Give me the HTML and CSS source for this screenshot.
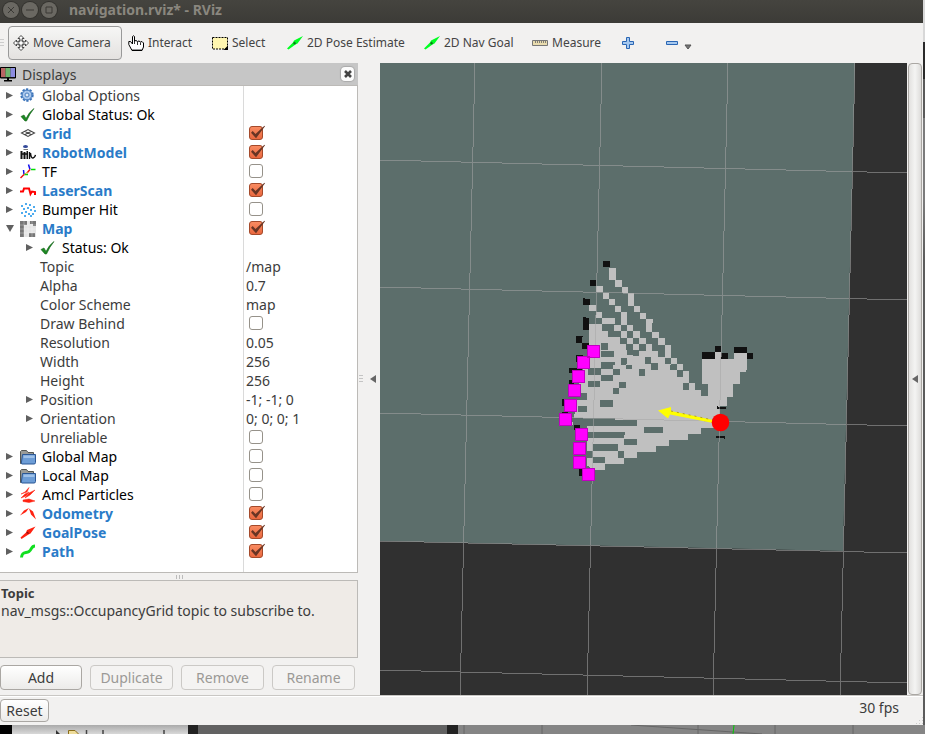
FILE: index.html
```html
<!DOCTYPE html>
<html lang="en">
<head>
<meta charset="utf-8">
<title>navigation.rviz* - RViz</title>
<link rel="stylesheet" href="styles.css">
</head>
<body>
<svg class="defs" aria-hidden="true">
  <symbol id="check" viewBox="0 0 16 16"><path d="M1 9.500 4 8 6 11.500Q9 5 14 1.500 9.500 7 6.500 14H5Z" fill="#1c8a22" stroke="#14621a" stroke-width=".6"/></symbol>
  <symbol id="folder" viewBox="0 0 16 16"><path d="M.5 14.500V2.500L1.500 1.500H6.500L8 3.500H13.500V14Z" fill="#999b98" stroke="#555753"/><path d="M2.500 5.500H15.500V13.500Q15.500 15 14 15H2Q.8 15 1.500 13Z" fill="#6d9dd6" stroke="#2b5795"/><path d="M3.500 6.500H14.500V9H3.500Z" fill="#9fc1e8"/></symbol>
  <symbol id="pose" viewBox="0 0 16 16"><path d="M0 13.500 6 7.500 7 5.500 16 1 10.500 8.500 8.500 9.500 1.500 14.500Z" fill="#0f2"/><path d="M6 8 8 6.500 9 9 7 9.500Z" fill="#087a18"/></symbol>
</svg>
<div class="window">
  <header class="titlebar">
    <button class="wm" aria-label="Close"><svg viewBox="0 0 16 16"><path d="M5 5 11 11M11 5 5 11"/></svg></button>
    <button class="wm" aria-label="Minimize"><svg viewBox="0 0 16 16"><path d="M4 8H12"/></svg></button>
    <button class="wm" aria-label="Maximize"><svg viewBox="0 0 16 16"><path d="M5 5H11V11H5Z"/></svg></button>
    <h1>navigation.rviz* - RViz</h1>
  </header>
  <nav class="toolbar">
    <span class="grip"></span>
    <button class="tool on"><svg viewBox="0 0 16 16"><path d="M8 .5 11 3.500H9.200V6.800H12.500V5L15.500 8 12.500 11V9.200H9.200V12.500H11L8 15.500 5 12.500H6.800V9.200H3.500V11L.5 8 3.500 5V6.800H6.800V3.500H5Z" fill="#fff" stroke="#333" stroke-width=".9"/><circle cx="8" cy="8" r="3" fill="none" stroke="#555" stroke-width=".7"/></svg>Move Camera</button>
    <button class="tool interact"><svg viewBox="0 0 16 16"><path d="M4.500 9V1.500Q5.500 0 6.500 1.500V6L8 5.500 9.500 6.500 11 6 12.500 7 14 6.500 15.500 8V12L14 15.500H4L.8 9.500V6.500H2.500L4.500 9" fill="#fff" stroke="#000"/><path d="M6.500 5V9M9.500 7V10M12.500 7.500V10M4 15H14" stroke="#000" stroke-width=".8"/></svg>Interact</button>
    <button class="tool select"><svg viewBox="0 0 16 16"><path d="M.5 2.500H15.500V14H.5Z" fill="#fff6b0" stroke="#000" stroke-dasharray="2 1"/><path d="M16 10.500V15H11.500Z"/></svg>Select</button>
    <button class="tool pose"><svg><use href="#pose"/></svg>2D Pose Estimate</button>
    <button class="tool goal"><svg><use href="#pose"/></svg>2D Nav Goal</button>
    <button class="tool measure"><svg viewBox="0 0 16 16"><path d="M.5 5.500H15.500V10.500H.5Z" fill="#e9dcae" stroke="#777"/><path d="M3.500 6V8M5.500 6V8M7.500 6V8M9.500 6V8M11.500 6V8M13.500 6V8" stroke="#666" stroke-width=".8"/></svg>Measure</button>
    <button class="tool plus" aria-label="Add tool"><svg viewBox="0 0 16 16"><path d="M6.500 2.500H9.500V6.500H13.500V9.500H9.500V13.500H6.500V9.500H2.500V6.500H6.500Z" fill="#a6c8ee" stroke="#2a66b4"/></svg></button>
    <button class="tool minus" aria-label="Remove tool"><svg viewBox="0 0 16 16"><path d="M2.500 6.500H13.500V9.500H2.500Z" fill="#a6c8ee" stroke="#2a66b4"/></svg><svg class="drop" viewBox="0 0 8 8"><path d="M1 3H7L4 7Z" fill="#777" stroke="#555"/></svg></button>
  </nav>
  <main>
    <section class="dock">
      <header class="docktitle"><svg viewBox="0 0 16 16"><path d="M.5 1.500H15.500V12H.5Z" fill="#222" stroke="#000"/><path d="M1 2H5.500V11H1Z" fill="#b96565"/><path d="M5.500 2H10.500V11H5.500Z" fill="#6fb56f"/><path d="M10.500 2H15V11H10.500Z" fill="#8d8de0"/><path d="M7 12H9V14H12V15.500H4V14H7Z"/></svg><h2>Displays</h2><button aria-label="Close panel"><svg viewBox="0 0 8 8"><path d="M1 1 7 7M7 1 1 7" stroke="#444" stroke-width="2.600"/></svg></button></header>
      <div class="tree">
      <table>
        <colgroup><col class="names"><col></colgroup>
        <tbody>
        <tr><td><button class="ex" aria-label="Expand"></button><svg viewBox="0 0 16 16"><circle cx="7" cy="7" r="5.700" fill="#9dbfe8" stroke="#3b73b9" stroke-width="2" stroke-dasharray="2.200 1.400"/><circle cx="7" cy="7" r="4.800" fill="#a9c7ec" stroke="#4c80c0"/><circle cx="7" cy="7" r="2" fill="#dce9f8" stroke="#4c80c0"/></svg>Global Options</td><td></td></tr>
        <tr class="blk"><td><button class="ex" aria-label="Expand"></button><svg><use href="#check"/></svg>Global Status: Ok</td><td></td></tr>
        <tr class="en"><td><button class="ex" aria-label="Expand"></button><svg viewBox="0 0 16 16"><path d="M1.500 7 8 3.500 14.500 7 8 10.500ZM4.700 5.200 11.300 8.800M11.300 5.200 4.700 8.800" fill="none" stroke="#444" stroke-width="1.100"/></svg><label for="c1">Grid</label></td><td><input type="checkbox" id="c1" checked></td></tr>
        <tr class="en"><td><button class="ex" aria-label="Expand"></button><svg viewBox="0 0 16 16"><ellipse cx="5.500" cy="1.500" rx="2.500" ry="1.500" fill="#334a9a"/><path d="M3.500 4.500H8" stroke="#777"/><path d="M.5 6H2.500V14H.5ZM3.500 7H5.500V14H3.500ZM6.500 6H8V14H6.500Z" fill="#111"/><path d="M2 9H8M9.500 7V14M10.500 8Q11 13.500 13 13T15.500 10" fill="none" stroke="#111" stroke-width="1.400"/></svg><label for="c2">RobotModel</label></td><td><input type="checkbox" id="c2" checked></td></tr>
        <tr class="blk"><td><button class="ex" aria-label="Expand"></button><svg viewBox="0 0 16 16"><path d="M11 5.500H15.500M4 10.500H8" stroke="#0d0" stroke-width="1.300"/><path d="M10 5.500 8.500 .5M4 10.500 3.500 6" stroke="#11e" stroke-width="1.500"/><path d="M10 5.500 7 9M4 10.500 .5 14" stroke="#e11" stroke-width="1.500"/><path d="M8 8 4 10.500" stroke="#e5a52c"/></svg><label for="c3">TF</label></td><td><input type="checkbox" id="c3"></td></tr>
        <tr class="en"><td><button class="ex" aria-label="Expand"></button><svg viewBox="0 0 16 16"><path d="M.5 9.500V8.500H3L4 5.500H9L10 9 10.500 11 12 8.500 15 9V12" fill="none" stroke="red" stroke-width="2"/></svg><label for="c4">LaserScan</label></td><td><input type="checkbox" id="c4" checked></td></tr>
        <tr class="blk"><td><button class="ex" aria-label="Expand"></button><svg viewBox="0 0 16 16"><path d="M1 4h2M5 2h2M9 3h2M13 5h2M3 7h2M7 6h2M10 8h2M14 9h2M1 11h2M5 10h2M8 12h2M12 12h2M4 14h2M10 14h2" stroke="#1691ea" stroke-width="1.500"/></svg><label for="c5">Bumper Hit</label></td><td><input type="checkbox" id="c5"></td></tr>
        <tr class="en"><td><button class="ex open" aria-label="Collapse"></button><svg viewBox="0 0 16 16"><path d="M0 0H16V16H0Z" fill="#e4e4e4"/><path d="M0 0H7V4H4V16H0ZM10 0H16V5H13V3H10ZM9 12H15V16H9Z" fill="#777"/><path d="M0 4H16M0 8H16M0 12H16M4 0V16M8 0V16M12 0V16" stroke="#fff" stroke-opacity=".5" stroke-width=".6"/></svg><label for="c6">Map</label></td><td><input type="checkbox" id="c6" checked></td></tr>
        <tr class="sub blk"><td><button class="ex" aria-label="Expand"></button><svg><use href="#check"/></svg>Status: Ok</td><td></td></tr>
        <tr class="prop"><td>Topic</td><td>/map</td></tr>
        <tr class="prop"><td>Alpha</td><td>0.7</td></tr>
        <tr class="prop"><td>Color Scheme</td><td>map</td></tr>
        <tr class="prop"><td><label for="c7">Draw Behind</label></td><td><input type="checkbox" id="c7"></td></tr>
        <tr class="prop"><td>Resolution</td><td>0.05</td></tr>
        <tr class="prop"><td>Width</td><td>256</td></tr>
        <tr class="prop"><td>Height</td><td>256</td></tr>
        <tr class="sub"><td><button class="ex" aria-label="Expand"></button>Position</td><td>-1; -1; 0</td></tr>
        <tr class="sub"><td><button class="ex" aria-label="Expand"></button>Orientation</td><td>0; 0; 0; 1</td></tr>
        <tr class="prop"><td><label for="c8">Unreliable</label></td><td><input type="checkbox" id="c8"></td></tr>
        <tr class="blk"><td><button class="ex" aria-label="Expand"></button><svg><use href="#folder"/></svg><label for="c9">Global Map</label></td><td><input type="checkbox" id="c9"></td></tr>
        <tr class="blk"><td><button class="ex" aria-label="Expand"></button><svg><use href="#folder"/></svg><label for="c10">Local Map</label></td><td><input type="checkbox" id="c10"></td></tr>
        <tr class="blk"><td><button class="ex" aria-label="Expand"></button><svg viewBox="0 0 16 16"><path d="M1 7 5 5 9 .5 7 5ZM5 11 9 6 15 3 10 8ZM1 11 5 7 9 5 6 9ZM3 13 9 12 15 14 9 15.500 3 14.500Z" fill="#f21" stroke="#f21" stroke-width=".5"/></svg><label for="c11">Amcl Particles</label></td><td><input type="checkbox" id="c11"></td></tr>
        <tr class="en"><td><button class="ex" aria-label="Expand"></button><svg viewBox="0 0 16 16"><path d="M0 9.500 4 4.500 9 2 6 6ZM9 2.500 13 5.500 16 13.500 11 8.500Z" fill="#f21"/></svg><label for="c12">Odometry</label></td><td><input type="checkbox" id="c12" checked></td></tr>
        <tr class="en"><td><button class="ex" aria-label="Expand"></button><svg viewBox="0 0 16 16"><path d="M.5 12.500 6 7.500 7 5 15.500 1.500 10.500 8.500 8.500 9.500 1.500 14Z" fill="#f21"/><path d="M6 8 8 6.500 9 9Z" fill="#811"/></svg><label for="c13">GoalPose</label></td><td><input type="checkbox" id="c13" checked></td></tr>
        <tr class="en"><td><button class="ex" aria-label="Expand"></button><svg viewBox="0 0 16 16"><path d="M1.500 13.500C2 7 6 9.500 9 7.500S11 2 15 2" fill="none" stroke="#0d1e" stroke-width="3"/></svg><label for="c14">Path</label></td><td><input type="checkbox" id="c14" checked></td></tr>
        </tbody>
      </table>
      </div>
      <div class="hsplit"><i></i></div>
      <div class="help"><h3>Topic</h3><p>nav_msgs::OccupancyGrid topic to subscribe to.</p></div>
      <div class="actions"><button>Add</button><button disabled>Duplicate</button><button disabled>Remove</button><button disabled>Rename</button></div>
    </section>
    <div class="vsplit"><i></i><button aria-label="Hide left dock"></button></div>
    <svg class="view" viewBox="380 63 527 632" preserveAspectRatio="none" role="img" aria-label="3D view">
      <path d="M380 63H855L843 551 380 541Z" fill="#5c6e6b"/>
      <g transform="translate(540 250) scale(.33333)" fill="#c0c0c0" shape-rendering="crispEdges">
        <path d="M207 54h21v36h-21zM225 90h21v21h-21zM246 110h18v19h-18zM264 129h18v39h-18zM282 168h18v18h-18zM300 188h18v20h-18zM318 207h21v12h-3v27h-18zM336 246h21v18h-21zM354 264h21v21h-21zM375 285h18v38h-18zM393 323h18v19h-18zM411 342h18v18h-18z"/>
        <path d="M168 108h21v18h-21zM189 129h18v18h-18zM207 147h18v18h-18zM225 168h18v18h-18zM243 186h18v38h-18zM261 224h18v19h-18zM279 243h21v20h-21zM297 263h21v19h-21zM318 282h18v20h-18z"/>
        <path d="M148 165h19v18h-19zM168 185h18v20h-18zM186 204h39v18h-39zM222 224h21v19h-21zM243 243h18v20h-18zM261 263h18v19h-18zM279 282h18v18h-18z"/>
        <path d="M148 222H186V243H204V260H240V282H258V300H279V302H354V321H375V342H393V361H135L148 300Z"/>
        <path d="M486 361V324H525V306H543V327H583V306H620V361Z"/>
        <path d="M183 278h21v22h-21zM261 300h18v16h-18zM183 302h39v18h-39zM243 325h18v18h-18zM279 302h18v16h-18zM243 342h15v18h-15zM315 320h18v22h-18zM183 336h42v16h-42zM333 340h21v20h-21z" fill="#5c6e6b"/>
        <path d="M189 33h21v17h-21zM150 90h18v18h-18zM129 144h7v3h14v18h-21zM129 201h9v3h9v36h-18zM108 258h21v3h-3v18h-18zM126 279h20v18h-20zM108 315h20v20h-20zM87 354h30v8h-30zM525 288h18v18h-18zM486 306h39v20h-39zM543 309h21v18h-21zM583 291h38v17h-38zM621 309h18v18h-18z" fill="#111"/>
      </g>
      <g transform="translate(540 365) scale(.33333)" fill="#c0c0c0" shape-rendering="crispEdges">
        <path d="M135 0H411V0H429V18H447V54H465V75H484V92H504V57H486V0H618V20H600V58H579V95H561V122H540V188H483V207H444V224H387V242H348V261H291V279H252V297H195V315H160L140 300V180H95L110 120 118 50Z"/>
        <path d="M144 10h39v19h-39zM183 0h36v11h-36zM183 30h36v18h-36zM144 48h36v18h-36zM219 12h21v18h-21zM257 0h19v11h-19zM297 12h18v21h-18zM333 0h21v14h-21zM390 0h21v14h-21zM411 14h18v21h-18zM429 54h18v21h-18zM237 51h21v18h-21zM219 69h18v18h-18zM110 84h31v20h-31zM180 105h39v21h-39zM113 123h28v18h-28zM99 160H225V165H291V183H127V179H99ZM312 186h57v18h-57zM140 201h115v9h-3v9h-112zM252 222h39v18h-39zM159 237h75v21h-75zM234 258h18v20h-18zM159 276h36v18h-36zM140 258h18v22h-18z" fill="#5c6e6b"/>
        <path d="M87 10h38v15h-38zM87 45h16v15h-16zM66 102h16v20h-16zM66 141h18v10h-18zM102 180h18v16h-18zM117 312h12v20h-12zM531 123h3v3h24v6h-27zM528 213h27v8h-4v-3h-23z" fill="#111"/>
      </g>
      <path d="M475 63 460 695M602 63 587 695M728 63 713 695M855 63 840 695M380 160 907 173M380 287 907 300M380 413 907 426M380 541 907 553M380 670 907 683" stroke="#a6a6a6" stroke-opacity=".55" fill="none" shape-rendering="crispEdges"/>
      <path d="M587.500 345.500h12v12h-12zM577.500 356.500h12v12h-12zM572.500 370.500h12v12h-12zM568.500 384.500h12v12h-12zM564.500 399h12v12h-12zM559.500 413.500h12v12h-12zM575.500 428.500h12v12h-12zM573.500 442.500h12v12h-12zM573.500 456.500h12v12h-12zM582.500 468.500h12v12h-12z" fill="#f0f" stroke="#c000c0" shape-rendering="crispEdges"/>
      <path d="M658 410.500 671 407V411L713 420V423L670 414.500 668 418.500Z" fill="#ff0"/>
      <path d="M671 411 713 420" stroke="#a89500" stroke-width=".8" stroke-dasharray="2 4"/>
      <circle cx="720.500" cy="422.500" r="8.800" fill="red"/>
    </svg>
    <div class="right"><button aria-label="Show right dock"></button></div>
  </main>
  <footer><button>Reset</button><span>30 fps</span><i class="sizegrip"></i></footer>
</div>
<div class="behind" aria-hidden="true"><span class="edge"></span><div class="files"><svg viewBox="0 0 126 9"><path d="M12 5 16 9H12Z" fill="#333"/><path d="M24.500 9V5.500H31L34.500 9" fill="#eedc9a" stroke="#8a6d1a"/><path d="M42.500 5V9M59 5V9M120 5V9" stroke="#444" stroke-width="1.500"/></svg></div><span class="gap"></span><span class="gray"></span><span class="gap last"></span><svg class="scene" viewBox="0 0 467 9" preserveAspectRatio="none"><path d="M6 0V9M84 0V9M240 0V9M317 0V9M395 0V9M173 0 304 9" stroke="#666" fill="none"/><path d="M276 0 275 9" stroke="#0c0"/></svg></div>
</body>
</html>
```
FILE: styles.css
```css
* { box-sizing: border-box; }
body { margin: 0; min-height: 100vh; display: flex; flex-direction: column; background: linear-gradient(#d8d8d8 0 42px, #2a2a2a 42px 79px, #5a5a5a 79px 118px, #7c7c7c 118px 200px, #5c5c5c 260px); color: #3c3c3c; font: 14px/17px "Noto Sans", "Open Sans", sans-serif; }
h1, h2, h3, p { margin: 0; }
button { font: inherit; color: inherit; padding: 0; border: 0; background: none; }
.defs { position: absolute; width: 0; height: 0; }
.window { flex: 1; display: flex; flex-direction: column; margin-right: 2px; background: #f2f1f0; }
.titlebar { display: flex; align-items: center; height: 23px; padding: 0 0 4px 3px; gap: 3px; background: linear-gradient(#45443f, #3c3b37); color: #8a877f; }
.titlebar h1 { font-size: 14px; line-height: 18px; margin-left: 9px; }
.wm { width: 16px; height: 16px; border-radius: 50%; background: #6a6862; box-shadow: 0 0 0 1px #33322e; }
.wm svg { display: block; width: 16px; height: 16px; fill: none; stroke: #3a3935; }
.toolbar { display: flex; align-items: center; height: 40px; padding-bottom: 1px; font-size: 12px; color: #444; }
.grip { width: 4px; height: 8px; margin-right: 4px; background: repeating-linear-gradient(#ccc 0 1px, transparent 1px 3px); }
.tool { display: flex; align-items: center; gap: 4px; height: 34px; white-space: nowrap; }
.tool svg { width: 16px; height: 16px; flex: none; }
.on { width: 114px; padding: 0 4px; border: 1px solid #999; border-radius: 4px; background: linear-gradient(#f6f6f5, #e4e2e0); }
.interact { width: 84px; padding-left: 6px; }
.select { width: 75px; padding-left: 6px; }
.pose { width: 137px; padding-left: 6px; }
.goal { width: 108px; padding-left: 6px; }
.measure { width: 88px; padding-left: 6px; }
.plus { width: 44px; padding-left: 6px; }
.minus { gap: 4px; padding-left: 6px; }
.tool .drop { width: 8px; height: 8px; margin-top: 6px; }
main { flex: 1; display: flex; min-height: 0; border-bottom: 1px solid #c9c7c4; }
.dock { width: 358px; flex: none; display: flex; flex-direction: column; }
.docktitle { display: flex; align-items: center; height: 22px; gap: 6px; padding-right: 4px; background: #c6c6c6; }
.docktitle svg { width: 16px; height: 16px; }
.docktitle h2 { flex: 1; font-size: 14px; font-weight: normal; }
.docktitle button { width: 13px; height: 14px; display: grid; place-items: center; border-radius: 4px; background: #fcfcfc; box-shadow: 0 0 1px 1px #aaa; }
.docktitle button svg { width: 8px; height: 8px; }
.tree { flex: 1; background: #fff linear-gradient(#dadada, #dadada) 243px 0 / 1px 100% no-repeat; border: solid #bcbab7; border-width: 1px 1px 1px 0; }
table { width: 100%; table-layout: fixed; border-collapse: collapse; }
.names { width: 246px; }
td { height: 19px; padding: 0; line-height: 19px; white-space: nowrap; vertical-align: middle; }
td:first-child { display: flex; align-items: center; padding-left: 5px; }
td svg { width: 16px; height: 16px; margin-right: 6px; flex: none; }
.ex { width: 15px; height: 15px; flex: none; }
.ex::before { content: ""; display: block; width: 7px; height: 7px; margin-left: 1px; background: #606060; clip-path: polygon(0 0, 100% 50%, 0 100%); }
.ex.open::before { width: 8px; clip-path: polygon(0 0, 100% 0, 50% 100%); }
.blk { color: #000; }
.en td { color: #2a7bc8; font-weight: bold; }
.sub td:first-child { padding-left: 25px; }
.prop td:first-child { padding-left: 40px; }
input { appearance: none; display: block; width: 14px; height: 14px; margin: 0 0 1px 3px; border: 1px solid #96928a; border-radius: 3px; background: #fff; position: relative; }
input:checked { background: linear-gradient(#f98b61, #e9683f); border-color: #a44a2b; }
input:checked::after { content: ""; position: absolute; left: 1px; top: -2px; width: 14px; height: 14px; background: #693524; clip-path: polygon(0 55%, 12% 42%, 32% 65%, 96% 6%, 100% 9%, 36% 95%); }
.hsplit { height: 7px; display: grid; place-items: center; }
.hsplit i { width: 7px; height: 4px; background: repeating-linear-gradient(90deg, #bbb 0 1px, transparent 1px 3px); }
.help { height: 78px; padding: 3px 1px; border: 1px solid #bcbab7; border-left: 0; background: #efebe7; }
.help h3 { font-size: 13px; line-height: 18px; }
.help p { line-height: 18px; }
.actions { display: grid; grid-template-columns: 82px repeat(3, 83px); gap: 8px; padding: 7px 0 5px; }
.actions button, footer button { height: 25px; border: 1px solid #aaa7a3; border-radius: 4px; background: linear-gradient(#fff, #ecebe9); }
.actions button:disabled { color: #9b9996; border-color: #cbc9c6; background: #f4f3f2; }
.vsplit { width: 22px; flex: none; display: flex; align-items: center; gap: 7px; padding-left: 1px; }
.vsplit i { width: 4px; height: 8px; background: repeating-linear-gradient(#c4c4c4 0 1px, transparent 1px 3px); }
.vsplit button, .right button { width: 6px; height: 8px; background: #666; clip-path: polygon(100% 0, 100% 100%, 0 50%); }
.view { flex: 1; min-width: 0; width: 0; height: auto; background: #303030; display: block; }
.right { width: 14px; margin: 0 1px; flex: none; display: grid; place-items: center; border: 1px solid #aaa7a3; border-radius: 4px; background: linear-gradient(90deg, #e2e1df, #f4f4f3 50%, #dddcda); }
footer { display: flex; align-items: center; height: 29px; padding-bottom: 1px; border-top: 1px solid #fff; }
footer button { width: 49px; height: 23px; }
footer span { margin: 0 16px 6px auto; }
.sizegrip { width: 8px; height: 8px; align-self: flex-end; background: radial-gradient(#ccc 1px, transparent 1px) 0 0 / 3px 3px; clip-path: polygon(100% 0, 100% 100%, 0 100%); }
.behind { display: flex; height: 9px; overflow: hidden; background: #858585; }
.edge { width: 12px; background: #000; }
.files { width: 176px; background: linear-gradient(#aaa, #d8d8d8); }
.files svg { display: block; width: 126px; height: 9px; margin-left: 32px; }
.gap { width: 10px; background: #222; }
.gray { width: 249px; background: #626262; }
.last { width: 11px; }
.scene { flex: 1; height: 9px; min-width: 0; }
```
